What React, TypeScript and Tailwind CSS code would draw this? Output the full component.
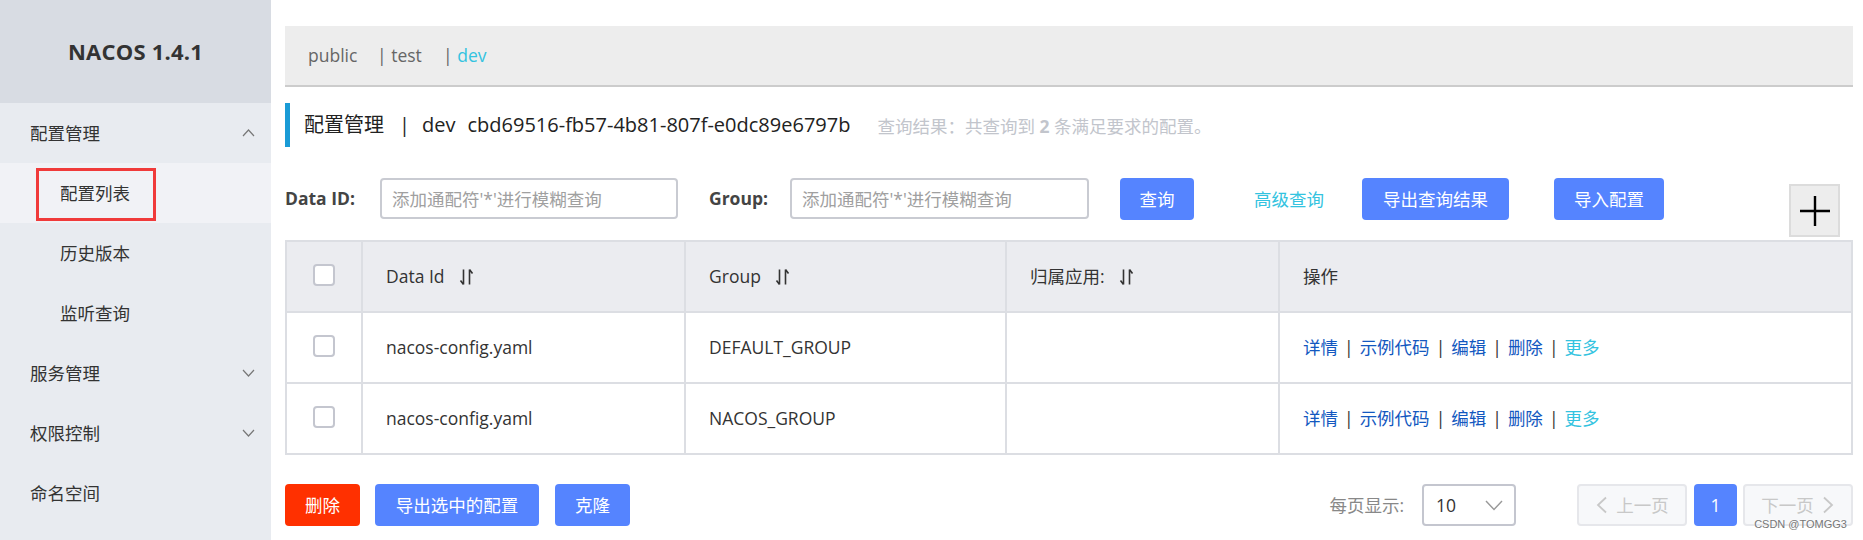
import React from "react";

const menu = [
  { label: "配置管理", level: 0, arrow: "up" },
  { label: "配置列表", level: 1, active: true },
  { label: "历史版本", level: 1 },
  { label: "监听查询", level: 1 },
  { label: "服务管理", level: 0, arrow: "down" },
  { label: "权限控制", level: 0, arrow: "down" },
  { label: "命名空间", level: 0 },
];

const rows = [
  { dataId: "nacos-config.yaml", group: "DEFAULT_GROUP" },
  { dataId: "nacos-config.yaml", group: "NACOS_GROUP" },
];

const Chevron = ({ up }: { up?: boolean }) => (
  <svg width="13" height="8" viewBox="0 0 13 8" fill="none" stroke="#777" strokeWidth="1.2">
    <path d={up ? "M1 7l5.5-6 5.5 6" : "M1 1l5.5 6 5.5-6"} />
  </svg>
);

const SortIcon = () => (
  <svg width="15" height="18" viewBox="0 0 15 18" className="ml-[14px]" fill="none" stroke="#333" strokeWidth="1.6">
    <path d="M4.5 1.5v15M4.5 16.5l-3-4" />
    <path d="M10.5 16.5v-15M10.5 1.5l3 4" />
  </svg>
);

const Checkbox = () => (
  <div className="w-[22px] h-[22px] rounded-[4px] border-2 border-[#c4c6cf] bg-white mb-[4px]" />
);

function Sidebar() {
  return (
    <div className="w-[271px] shrink-0 h-[540px] bg-[#e8ebf0] flex flex-col">
      <div className="h-[103px] bg-[#d8dce3] flex items-center justify-center">
        <span className="text-[22px] font-bold text-[#333] tracking-[0.2px]">NACOS 1.4.1</span>
      </div>
      {menu.map((m) => (
        <div
          key={m.label}
          className={
            "h-[60px] flex items-center pr-[16px] text-[17.5px] text-[#333] " +
            (m.level === 1 ? "pl-[60px] " : "pl-[30px] ") +
            (m.active ? "bg-[#f1f2f6] relative" : "")
          }
        >
          {m.active && (
            <div className="absolute left-[36px] top-[5px] w-[120px] h-[53px] border-[3px] border-[#f03a3a]" />
          )}
          <span>{m.label}</span>
          {m.arrow && (
            <span className="ml-auto">
              <Chevron up={m.arrow === "up"} />
            </span>
          )}
        </div>
      ))}
    </div>
  );
}

function Btn({ children, w, red }: { children: React.ReactNode; w: string; red?: boolean }) {
  return (
    <div
      className={
        "h-[42px] rounded-[4px] flex items-center justify-center text-white text-[17.5px] " +
        w +
        (red ? " bg-[#ff3000]" : " bg-[#5584ff]")
      }
    >
      {children}
    </div>
  );
}

export default function App() {
  return (
    <div className="flex w-full h-[540px] bg-white overflow-hidden relative font-['Open_Sans','Noto_Sans_CJK_SC',sans-serif] text-[#333]">
      <Sidebar />
      <div className="flex-1 min-w-0 pl-[14px] pr-[10px] pt-[26px]">
        {/* namespace tabs */}
        <div className="h-[61px] bg-[#ededed] border-b-2 border-[#cccccc] flex items-center pl-[23px] text-[17.5px] text-[#666]">
          <span className="w-[69px]">public</span>
          <span className="w-[66px]">| test</span>
          <span className="w-[60px]">
            | <span className="text-[#33c3e0]">dev</span>
          </span>
        </div>

        {/* title */}
        <div className="mt-[16px] h-[44px] border-l-[5px] border-[#1a9bd6] flex items-center pl-[14px]">
          <span className="text-[20px] text-[#222]">配置管理</span>
          <span className="text-[20px] text-[#222] ml-[15px]">|</span>
          <span className="text-[20px] text-[#222] ml-[12px]">dev</span>
          <span className="text-[20px] text-[#222] ml-[12px]">cbd69516-fb57-4b81-807f-e0dc89e6797b</span>
          <span className="text-[17.5px] text-[#c2c5cc] ml-[27px] mt-[3px]">
            查询结果：共查询到 <b className="font-bold">2</b> 条满足要求的配置。
          </span>
        </div>

        {/* search row */}
        <div className="mt-[31px] flex items-start">
          <div className="w-[95px] h-[41px] flex items-center font-bold text-[17.5px] text-[#444]">Data ID:</div>
          <input
            className="w-[298px] h-[41px] border-2 border-[#c9cbd2] rounded-[4px] px-[10px] text-[17.5px] placeholder:text-[#a0a0a0] outline-none"
            placeholder="添加通配符'*'进行模糊查询"
          />
          <div className="ml-[31px] w-[81px] h-[41px] flex items-center font-bold text-[17.5px] text-[#444]">Group:</div>
          <input
            className="w-[299px] h-[41px] border-2 border-[#c9cbd2] rounded-[4px] px-[10px] text-[17.5px] placeholder:text-[#a0a0a0] outline-none"
            placeholder="添加通配符'*'进行模糊查询"
          />
          <div className="ml-[31px]">
            <Btn w="w-[74px]">查询</Btn>
          </div>
          <div className="ml-[60px] h-[42px] flex items-center text-[17.5px] text-[#33c3e0]">高级查询</div>
          <div className="ml-[38px]">
            <Btn w="w-[147px]">导出查询结果</Btn>
          </div>
          <div className="ml-[45px]">
            <Btn w="w-[110px]">导入配置</Btn>
          </div>
          <div className="ml-auto mr-[13px] mt-[6px] w-[51px] h-[53px] bg-[#ededed] border-2 border-[#dcdcdc] flex items-center justify-center">
            <svg width="32" height="32" viewBox="0 0 32 32" stroke="#000" strokeWidth="2.4">
              <path d="M1 16h30M16 1v30" />
            </svg>
          </div>
        </div>

        {/* table */}
        <div className="mt-[3px] border-2 border-[#dcdee3] text-[17.5px]">
          <div className="grid grid-cols-[74px_323px_321px_273px_1fr] h-[69px] bg-[#ebecf0]">
            <div className="flex items-center justify-center">
              <Checkbox />
            </div>
            <div className="border-l-2 border-[#dcdee3] flex items-center pl-[23px]">
              Data Id
              <SortIcon />
            </div>
            <div className="border-l-2 border-[#dcdee3] flex items-center pl-[23px]">
              Group
              <SortIcon />
            </div>
            <div className="border-l-2 border-[#dcdee3] flex items-center pl-[23px]">
              归属应用:
              <SortIcon />
            </div>
            <div className="border-l-2 border-[#dcdee3] flex items-center pl-[23px]">操作</div>
          </div>
          {rows.map((r) => (
            <div
              key={r.group}
              className="grid grid-cols-[74px_323px_321px_273px_1fr] h-[71px] border-t-2 border-[#dcdee3]"
            >
              <div className="flex items-center justify-center">
                <Checkbox />
              </div>
              <div className="border-l-2 border-[#dcdee3] flex items-center pl-[23px]">{r.dataId}</div>
              <div className="border-l-2 border-[#dcdee3] flex items-center pl-[23px]">{r.group}</div>
              <div className="border-l-2 border-[#dcdee3]" />
              <div className="border-l-2 border-[#dcdee3] flex items-center pl-[23px] text-[#1358c0]">
                <span>详情</span>
                <span className="mx-[6px] text-[#333]">|</span>
                <span>示例代码</span>
                <span className="mx-[6px] text-[#333]">|</span>
                <span>编辑</span>
                <span className="mx-[6px] text-[#333]">|</span>
                <span>删除</span>
                <span className="mx-[6px] text-[#333]">|</span>
                <span className="text-[#33c3e0]">更多</span>
              </div>
            </div>
          ))}
        </div>

        {/* bottom bar */}
        <div className="mt-[29px] flex items-center">
          <Btn w="w-[75px]" red>
            删除
          </Btn>
          <div className="ml-[15px]">
            <Btn w="w-[164px]">导出选中的配置</Btn>
          </div>
          <div className="ml-[16px]">
            <Btn w="w-[75px]">克隆</Btn>
          </div>
          <div className="ml-auto flex items-center">
            <span className="text-[17.5px] text-[#888]">每页显示:</span>
            <div className="ml-[18px] w-[94px] h-[42px] border-2 border-[#c4c6cf] rounded-[4px] flex items-center pl-[12px] pr-[11px] text-[17.5px] text-[#333]">
              <span>10</span>
              <svg className="ml-auto" width="18" height="11" viewBox="0 0 18 11" fill="none" stroke="#999" strokeWidth="1.4">
                <path d="M1 1l8 8.5 8-8.5" />
              </svg>
            </div>
            <div className="ml-[61px] w-[110px] h-[42px] bg-[#f7f8fa] border-2 border-[#e6e7eb] rounded-[4px] flex items-center justify-center text-[17.5px] text-[#c8c8c8]">
              <svg width="13" height="18" viewBox="0 0 13 18" fill="none" stroke="#c8c8c8" strokeWidth="1.8">
                <path d="M11 1.5L3 9l8 7.5" />
              </svg>
              <span className="ml-[8px]">上一页</span>
            </div>
            <div className="ml-[7px] w-[43px] h-[42px] bg-[#5584ff] rounded-[4px] flex items-center justify-center text-[17.5px] text-white">
              1
            </div>
            <div className="ml-[6px] w-[110px] h-[42px] bg-[#f7f8fa] border-2 border-[#e6e7eb] rounded-[4px] flex items-center justify-center text-[17.5px] text-[#c8c8c8]">
              <span className="mr-[8px]">下一页</span>
              <svg width="13" height="18" viewBox="0 0 13 18" fill="none" stroke="#c8c8c8" strokeWidth="1.8">
                <path d="M2 1.5L10 9l-8 7.5" />
              </svg>
            </div>
          </div>
        </div>
      </div>
      <div className="absolute right-[16px] bottom-[8px] text-[11px] text-[#777] font-['Liberation_Sans',sans-serif] [text-shadow:0_0_2px_#fff]">
        CSDN @TOMGG3
      </div>
    </div>
  );
}
